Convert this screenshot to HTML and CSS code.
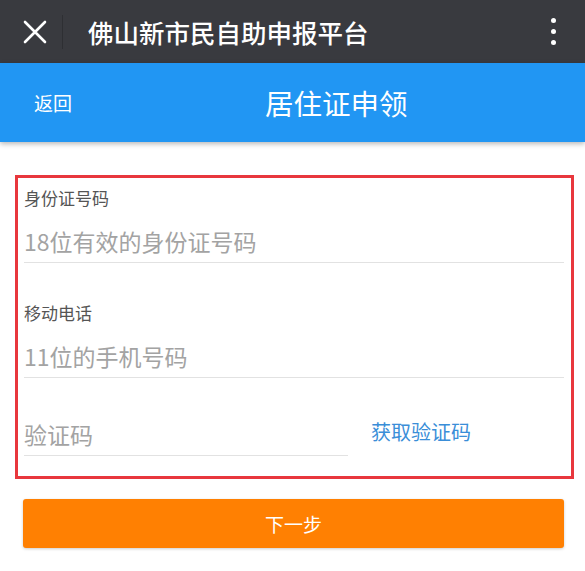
FILE: index.html
```html
<!DOCTYPE html>
<html lang="zh-CN">
<head>
<meta charset="utf-8">
<title>居住证申领</title>
<link rel="stylesheet" href="styles.css">
</head>
<body>
<div class="topbar">
  <svg class="close" width="24" height="24" viewBox="0 0 24 24"><path d="M2 2 L22 22 M22 2 L2 22" stroke="#fff" stroke-width="2.6" stroke-linecap="round"/></svg>
  <div class="divider"></div>
  <div class="apptitle">佛山新市民自助申报平台</div>
  <div class="more"><span></span><span></span><span></span></div>
</div>
<div class="header">
  <div class="back">返回</div>
  <div class="pagetitle">居住证申领</div>
</div>
<div class="form">
  <div class="field">
    <div class="label">身份证号码</div>
    <div class="input">18位有效的身份证号码</div>
  </div>
  <div class="field">
    <div class="label">移动电话</div>
    <div class="input">11位的手机号码</div>
  </div>
  <div class="coderow">
    <div class="input code">验证码</div>
    <div class="getcode">获取验证码</div>
  </div>
</div>
<div class="next">下一步</div>
</body>
</html>
```
FILE: styles.css
```css
* { box-sizing: border-box; }
body {
  margin: 0;
  width: 585px;
  height: 571px;
  overflow: hidden;
  background: #fff;
  font-family: "Noto Sans CJK SC", "Noto Sans", sans-serif;
}
.topbar {
  height: 63px;
  background: #393a3f;
  display: flex;
  align-items: center;
  position: relative;
}
.close { margin-left: 23px; }
.divider {
  width: 1px;
  height: 34px;
  background: #2e2f33;
  margin-left: 15px;
}
.apptitle {
  margin-left: 25px;
  color: #fff;
  font-size: 25.5px;
  font-weight: 500;
  line-height: 30px;
  flex: 1;
}
.more {
  display: flex;
  flex-direction: column;
  gap: 6px;
  margin-right: 29px;
}
.more span {
  width: 5px;
  height: 5px;
  border-radius: 50%;
  background: #fff;
}
.header {
  height: 79px;
  background: #2196f3;
  display: flex;
  align-items: center;
  box-shadow: 0 2px 5px rgba(0,0,0,0.28);
  position: relative;
}
.back {
  color: #fff;
  font-size: 19px;
  margin-left: 34px;
  width: 231px;
}
.pagetitle {
  color: #fff;
  font-size: 28.5px;
}
.form {
  margin: 33px 11px 0 15px;
  border: 3px solid #e8373d;
  padding: 10px 7px 19px 6px;
  height: 304px;
}
.field + .field { margin-top: 40px; }
.label {
  font-size: 17px;
  line-height: 20px;
  color: #555;
}
.input {
  margin-top: 12px;
  height: 43px;
  line-height: 43px;
  font-size: 23px;
  color: #a3a3a3;
  border-bottom: 1px solid #e2e2e2;
}
.coderow {
  margin-top: 35px;
  display: flex;
  align-items: center;
}
.input.code {
  margin-top: 0;
  width: 324px;
}
.getcode {
  margin-left: 23px;
  margin-top: -7px;
  font-size: 20px;
  color: #3a8ed8;
}
.next {
  margin: 20px 21px 0 23px;
  height: 49px;
  background: #ff8002;
  border-radius: 3px;
  box-shadow: 0 1px 3px rgba(0,0,0,0.2);
  color: #fff;
  font-size: 19px;
  display: flex;
  align-items: center;
  justify-content: center;
}
```
